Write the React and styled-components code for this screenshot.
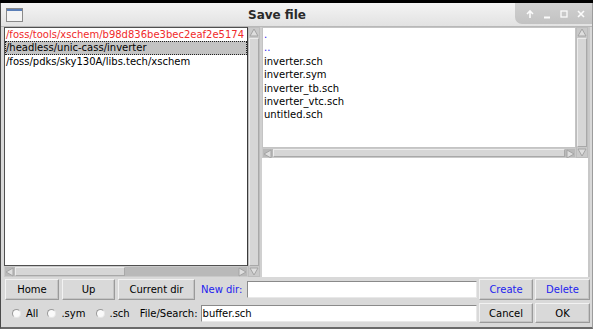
import styled, { createGlobalStyle } from "styled-components";

const Global = createGlobalStyle`
  html, body { margin: 0; padding: 0; background: #000; }
  body { font-family: "DejaVu Sans", "Liberation Sans", sans-serif; }
`;

const Screen = styled.div`
  width: 593px;
  height: 329px;
  padding-top: 3px;
  box-sizing: border-box;
  background: #000;
  overflow: hidden;
`;

const Window = styled.div`
  height: 326px;
  display: flex;
  flex-direction: column;
  background: #d9d9d9;
  border-left: 1px solid #4a4a4a;
  border-right: 1px solid #9c9c9c;
  border-bottom: 2px solid #6a6a6a;
  box-sizing: border-box;
`;

const TitleBar = styled.div`
  height: 23px;
  flex: none;
  display: flex;
  align-items: center;
  background: linear-gradient(#f4f4f4, #e2e2e2);
  border-bottom: 1px solid #b8b8b8;
  padding-left: 5px;
`;

const Title = styled.div`
  flex: 1;
  text-align: center;
  padding-left: 16px;
  font-size: 12px;
  font-weight: bold;
  color: #2a2a2a;
`;

const Controls = styled.div`
  align-self: flex-start;
  width: 77px;
  height: 21px;
  display: flex;
  align-items: center;
  justify-content: space-around;
  padding: 0 2px 0 6px;
  box-sizing: border-box;
  background: linear-gradient(#d0d0d0, #c2c2c2);
  border-bottom-left-radius: 7px;
`;

const Panes = styled.div`
  height: 250px;
  flex: none;
  display: flex;
  padding: 0 2px 0 3px;
`;

const LeftPane = styled.div`
  width: 256px;
  display: grid;
  grid-template-columns: 1fr 12px;
  grid-template-rows: 1fr 11px;
`;

const Sash = styled.div`
  width: 2px;
  background: #d0d0d0;
`;

const RightPane = styled.div`
  flex: 1;
  display: flex;
  flex-direction: column;
`;

const RightTop = styled.div`
  height: 131px;
  display: grid;
  grid-template-columns: 1fr 12px 2px;
  grid-template-rows: 1fr 10px;
`;

const List = styled.div`
  grid-column: 1;
  grid-row: 1;
  background: #fff;
  border: 1px solid ${(p) => (p.$focus ? "#505050" : "#c4c4c4")};
  border-right-color: ${(p) => (p.$focus ? "#3a3a3a" : "#c4c4c4")};
  overflow: hidden;
  font-size: 10px;
  line-height: 13.4px;
`;

const Row = styled.div`
  padding-left: 1px;
  height: 13.4px;
  white-space: nowrap;
  color: ${(p) => p.$color || "#000"};
  background: ${(p) => (p.$selected ? "#c3c3c3" : "transparent")};
  outline: ${(p) => (p.$selected ? "1px dotted #222" : "none")};
  outline-offset: -1px;
`;

const Preview = styled.div`
  flex: 1;
  background: #fff;
  border-right: 2px solid #c8c8c8;
`;

const VScroll = styled.div`
  grid-column: 2;
  grid-row: 1 / 3;
  display: flex;
  flex-direction: column;
  background: #c9c9c9;
  border: 1px solid #bdbdbd;
  box-sizing: border-box;
`;

const HScroll = styled.div`
  grid-column: 1;
  grid-row: 2;
  display: flex;
  background: #b9b9b9;
  border: 1px solid #c9c9c9;
  box-sizing: border-box;
`;

const EdgeStrip = styled.div`
  grid-column: 3;
  grid-row: 1 / 3;
  background: #c8c8c8;
`;

const Thumb = styled.div`
  flex: ${(p) => p.$flex || 1};
  background: #d6d6d6;
  border-top: 1px solid #ececec;
  border-left: 1px solid #ececec;
  border-bottom: 1px solid #a8a8a8;
  border-right: 1px solid #a8a8a8;
`;

const Gap = styled.div`
  flex: ${(p) => p.$flex || 1};
`;

const ArrowBox = styled.div`
  flex: none;
  width: 10px;
  height: 10px;
  display: flex;
  align-items: center;
  justify-content: center;
`;

const Toolbar = styled.div`
  display: flex;
  align-items: center;
  gap: ${(p) => p.$gap ?? 3}px;
  height: ${(p) => p.$h}px;
  margin-top: ${(p) => p.$mt}px;
  padding: 0 2px 0 ${(p) => p.$pl}px;
  font-size: 10px;
`;

const Button = styled.button`
  width: ${(p) => p.$w}px;
  height: 100%;
  margin: 0;
  margin-left: ${(p) => p.$ml || 0}px;
  padding: 0;
  font-family: "DejaVu Sans", "Liberation Sans", sans-serif;
  font-size: 10px;
  color: ${(p) => (p.$blue ? "#2222ee" : "#000")};
  background: #d9d9d9;
  border: 1px solid;
  border-color: #f2f2f2 #9a9a9a #9a9a9a #f2f2f2;
  box-shadow: inset -1px -1px 0 #c4c4c4;
  flex: none;
`;

const Label = styled.span`
  color: ${(p) => (p.$blue ? "#2222ee" : "#000")};
  margin-left: ${(p) => p.$ml || 0}px;
  white-space: nowrap;
`;

const Entry = styled.div`
  flex: 1;
  height: 15px;
  margin-left: ${(p) => p.$ml || 0}px;
  background: #fff;
  border: 1px solid;
  border-color: #8a8a8a #e8e8e8 #e8e8e8 #8a8a8a;
  padding-left: 1px;
  line-height: 15px;
  font-size: 10px;
`;

const Radio = styled.label`
  display: flex;
  align-items: center;
  gap: ${(p) => p.$gap}px;
  margin-left: ${(p) => p.$ml}px;
`;

const Dot = styled.span`
  width: 7px;
  height: 7px;
  border-radius: 50%;
  background: #fafafa;
  border: 1px solid;
  border-color: #9a9a9a #e6e6e6 #e6e6e6 #9a9a9a;
`;

const Arrow = ({ dir }) => {
  const pts = {
    up: "1,8 5,1 9,8",
    down: "1,2 5,9 9,2",
    left: "8,1 1,5 8,9",
    right: "2,1 9,5 2,9",
  }[dir];
  return (
    <ArrowBox>
      <svg width="10" height="10" viewBox="0 0 10 10">
        <polygon points={pts} fill="#dedede" stroke="#a4a4a4" strokeWidth="1" />
      </svg>
    </ArrowBox>
  );
};

const WinIcon = () => (
  <svg width="17" height="14" viewBox="0 0 17 14">
    <rect x="0.5" y="0.5" width="16" height="13" fill="#f4f4f4" stroke="#8a8a8a" />
    <rect x="1" y="1" width="15" height="2" fill="#5b7fb8" />
  </svg>
);

const CtlIcon = ({ kind }) => (
  <svg width="10" height="10" viewBox="0 0 10 10" fill="none" stroke="#fbfbfb" strokeWidth="1.6">
    {kind === "up" && <path d="M5 9V2M2 5l3-3 3 3" />}
    {kind === "min" && <path d="M2 8.5h6" strokeWidth="2" />}
    {kind === "max" && <rect x="2" y="2" width="6" height="6" strokeWidth="1.3" />}
    {kind === "close" && <path d="M2 2l6 6M8 2l-6 6" />}
  </svg>
);

const dirs = [
  { text: "/foss/tools/xschem/b98d836be3bec2eaf2e5174", color: "#f02a2a" },
  { text: "/headless/unic-cass/inverter", selected: true },
  { text: "/foss/pdks/sky130A/libs.tech/xschem" },
];

const files = [
  { text: ".", color: "#2222ee" },
  { text: "..", color: "#2222ee" },
  { text: "inverter.sch" },
  { text: "inverter.sym" },
  { text: "inverter_tb.sch" },
  { text: "inverter_vtc.sch" },
  { text: "untitled.sch" },
];

export default function App() {
  return (
    <Screen>
      <Global />
      <Window>
        <TitleBar>
          <WinIcon />
          <Title>Save file</Title>
          <Controls>
            <CtlIcon kind="up" />
            <CtlIcon kind="min" />
            <CtlIcon kind="max" />
            <CtlIcon kind="close" />
          </Controls>
        </TitleBar>

        <Panes>
          <LeftPane>
            <List $focus>
              {dirs.map((d) => (
                <Row key={d.text} $color={d.color} $selected={d.selected}>
                  {d.text}
                </Row>
              ))}
            </List>
            <VScroll>
              <Arrow dir="up" />
              <Thumb />
              <Arrow dir="down" />
            </VScroll>
            <HScroll>
              <Arrow dir="left" />
              <Thumb $flex={108} />
              <Gap $flex={112} />
              <Arrow dir="right" />
            </HScroll>
          </LeftPane>
          <Sash />
          <RightPane>
            <RightTop>
              <List>
                {files.map((f) => (
                  <Row key={f.text} $color={f.color}>
                    {f.text}
                  </Row>
                ))}
              </List>
              <VScroll>
                <Arrow dir="up" />
                <Thumb />
                <Arrow dir="down" />
              </VScroll>
              <EdgeStrip />
              <HScroll>
                <Arrow dir="left" />
                <Thumb />
                <Arrow dir="right" />
              </HScroll>
            </RightTop>
            <Preview />
          </RightPane>
        </Panes>

        <Toolbar $h={21} $mt={2} $pl={4}>
          <Button $w={54}>Home</Button>
          <Button $w={53}>Up</Button>
          <Button $w={77}>Current dir</Button>
          <Label $blue $ml={3}>New dir:</Label>
          <Entry $ml={2} />
          <Button $w={54} $blue $ml={-1}>Create</Button>
          <Button $w={55} $blue $ml={-1}>Delete</Button>
        </Toolbar>

        <Toolbar $h={20} $mt={3} $pl={11} $gap={0}>
          <Radio $gap={5} $ml={0}><Dot />All</Radio>
          <Radio $gap={5} $ml={9}><Dot />.sym</Radio>
          <Radio $gap={4} $ml={11}><Dot />.sch</Radio>
          <Label $ml={10}>File/Search:</Label>
          <Entry $ml={3}>buffer.sch</Entry>
          <Button $w={54} $ml={2}>Cancel</Button>
          <Button $w={55} $ml={2}>OK</Button>
        </Toolbar>
      </Window>
    </Screen>
  );
}
